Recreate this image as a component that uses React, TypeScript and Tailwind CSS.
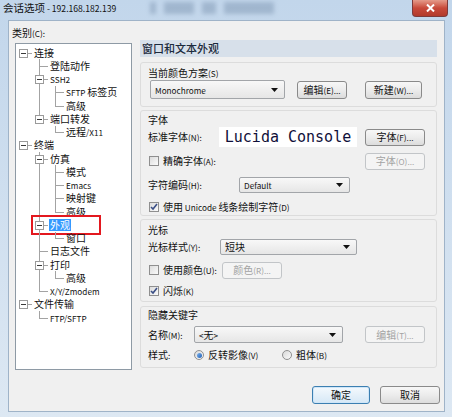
import React from "react";

// latin runs in the reference render visibly smaller than the CJK glyphs
const mix = (s: string) =>
  s.split(/([\u3400-\u9fff\uff00-\uffef]+)/).map((part, i) =>
    /[\u3400-\u9fff\uff00-\uffef]/.test(part) ? (
      <React.Fragment key={i}>{part}</React.Fragment>
    ) : part ? (
      <span key={i} className="text-[0.82em] leading-none">
        {part}
      </span>
    ) : null
  );

type Row = {
  t: string;
  l: number;
  e?: boolean;
  up?: boolean;
  down?: boolean;
  g?: number[];
  sel?: boolean;
};

const rows: Row[] = [
  { t: "连接", l: 0, e: true },
  { t: "登陆动作", l: 1, up: true, down: true },
  { t: "SSH2", l: 1, e: true, up: true, down: true },
  { t: "SFTP 标签页", l: 2, up: true, down: true, g: [1] },
  { t: "高级", l: 2, up: true, g: [1] },
  { t: "端口转发", l: 1, e: true, up: true },
  { t: "远程/X11", l: 2, up: true },
  { t: "终端", l: 0, e: true },
  { t: "仿真", l: 1, e: true, up: true, down: true },
  { t: "模式", l: 2, up: true, down: true, g: [1] },
  { t: "Emacs", l: 2, up: true, down: true, g: [1] },
  { t: "映射键", l: 2, up: true, down: true, g: [1] },
  { t: "高级", l: 2, up: true, g: [1] },
  { t: "外观", l: 1, e: true, up: true, down: true, sel: true },
  { t: "窗口", l: 2, up: true, g: [1] },
  { t: "日志文件", l: 1, up: true, down: true },
  { t: "打印", l: 1, e: true, up: true, down: true },
  { t: "高级", l: 2, up: true, g: [1] },
  { t: "X/Y/Zmodem", l: 1, up: true },
  { t: "文件传输", l: 0, e: true },
  { t: "FTP/SFTP", l: 1, up: true },
];

const TreeRow = ({ r }: { r: Row }) => (
  <div className="relative flex h-[13.25px] items-center">
    {Array.from({ length: r.l }).map((_, i) => (
      <div key={i} className="relative h-full w-[16px] shrink-0">
        {r.g?.includes(i) && <span className="absolute left-[7px] top-0 h-full w-px bg-[#a3a3a3]" />}
      </div>
    ))}
    <div className="relative h-full w-[16px] shrink-0">
      {r.up && <span className="absolute left-[7px] top-0 h-1/2 w-px bg-[#a3a3a3]" />}
      {r.down && <span className="absolute left-[7px] top-1/2 h-1/2 w-px bg-[#a3a3a3]" />}
      <span className="absolute left-[7px] top-1/2 h-px w-[9px] bg-[#a3a3a3]" />
      {r.e && (
        <span className="absolute left-[3px] top-[calc(50%-4px)] flex h-[9px] w-[9px] items-center justify-center border border-[#9a9a9a] bg-white">
          <span className="h-px w-[5px] bg-[#3a3a3a]" />
        </span>
      )}
    </div>
    <span
      className={
        r.sel
          ? "ml-px flex h-[12px] items-center whitespace-nowrap bg-[#3399ff] px-px text-[10px] leading-[12px] text-white"
          : "ml-px flex h-[12px] items-center whitespace-nowrap px-px text-[10px] leading-[12px] text-[#111]"
      }
    >
      <span>{mix(r.t)}</span>
    </span>
    {r.sel && (
      <span className="pointer-events-none absolute left-[15px] top-[-3px] h-[20px] w-[70px] border-2 border-[#e3181f]" />
    )}
  </div>
);

const Btn = ({ children, w, dis, def }: { children: string; w: string; dis?: boolean; def?: boolean }) => (
  <div
    className={[
      "flex h-[17px] shrink-0 items-center justify-center rounded-[3px] border text-[10px] leading-[12px]",
      w,
      dis
        ? "border-[#c2c5c8] bg-[#f4f4f4] text-[#a3a3a3]"
        : def
        ? "border-[#3c7fb1] bg-gradient-to-b from-[#f4f9fd] to-[#d6e8f6] text-[#111] shadow-[inset_0_0_0_1px_#cfe6f8]"
        : "border-[#8a8a8a] bg-gradient-to-b from-[#f7f7f7] via-[#ececec] to-[#dcdcdc] text-[#111]",
    ].join(" ")}
  >
    <span>{mix(children)}</span>
  </div>
);

const Combo = ({ children, w, h = "h-[16px]" }: { children: string; w: string; h?: string }) => (
  <div
    className={[
      "flex shrink-0 items-center justify-between rounded-[2px] border border-[#a2a5a9] bg-gradient-to-b from-[#f8f8f8] to-[#e6e6e6] pl-[4px] pr-[6px] text-[10px] leading-[12px] text-[#111]",
      w,
      h,
    ].join(" ")}
  >
    <span>{mix(children)}</span>
    <svg width="7" height="4" viewBox="0 0 7 4">
      <path d="M0 0h7L3.5 4z" fill="#111" />
    </svg>
  </div>
);

const Check = ({ on }: { on?: boolean }) => (
  <span className="flex h-[10px] w-[10px] shrink-0 items-center justify-center border border-[#8f8f8f] bg-gradient-to-br from-[#dcdcdc] to-[#fbfbfb]">
    {on && (
      <svg width="8" height="8" viewBox="0 0 8 8">
        <path d="M1 4l2 2 4-5" fill="none" stroke="#3b4f86" strokeWidth="1.6" />
      </svg>
    )}
  </span>
);

const Radio = ({ on }: { on?: boolean }) => (
  <span className="flex h-[10px] w-[10px] shrink-0 items-center justify-center rounded-full border border-[#8f8f8f] bg-gradient-to-br from-[#d8d8d8] to-[#fbfbfb]">
    {on && <span className="h-[5px] w-[5px] rounded-full bg-gradient-to-br from-[#7cb2ec] to-[#1f5fb5]" />}
  </span>
);

const Text = ({ children, className = "" }: { children: string; className?: string }) => (
  <span className={"whitespace-nowrap leading-[12px] " + className}>{mix(children)}</span>
);

export default function App() {
  return (
    <div className="relative h-[417px] w-[452px] overflow-hidden bg-gradient-to-b from-[#c2d6eb] to-[#dde8f3] font-['Noto_Sans_CJK_SC','Liberation_Sans',sans-serif]">
      {/* title bar */}
      <div className="relative flex h-[20px] items-start">
        {/* blurred glass behind the title */}
        <div className="pointer-events-none absolute left-[150px] top-[2px] flex gap-[8px] opacity-40 blur-[2px]">
          <span className="h-[12px] w-[6px] bg-[#6f88a5]" />
          <span className="h-[12px] w-[30px] bg-[#6f88a5]" />
          <span className="h-[12px] w-[14px] bg-[#6f88a5]" />
          <span className="h-[12px] w-[50px] bg-[#6f88a5]" />
        </div>
        <span className="relative ml-[3px] mt-[1px] whitespace-nowrap text-[10.5px] leading-[13px] text-[#111]">
          {mix("会话选项 - 192.168.182.139")}
        </span>
        <div className="absolute right-[4px] top-0 flex h-[17px] w-[36px] items-center justify-center rounded-b-[4px] border border-t-0 border-[#7d3a3a] bg-gradient-to-b from-[#e49a8a] via-[#c8493a] to-[#b23a2b]">
          <svg width="9" height="8" viewBox="0 0 9 8">
            <path d="M1 0.5l7 7M8 0.5l-7 7" stroke="#fff" strokeWidth="2" />
          </svg>
        </div>
      </div>

      {/* client */}
      <div className="ml-[8px] flex h-[392px] w-[437px] flex-col border border-[#9fb3c8] bg-[#f0f0f0] text-[10px] text-[#111]">
        <div className="flex items-start">
          <div className="ml-[3px] flex flex-col">
            <div className="mt-[5px] h-[14px] leading-[14px]">{mix("类别(C):")}</div>
            <div className="ml-[3px] mt-[3px] h-[327px] w-[117px] border border-[#8e9aa5] bg-white pt-[2px]">
              {rows.map((r, i) => (
                <TreeRow key={i} r={r} />
              ))}
            </div>
          </div>

          <div className="ml-[8px] mt-[19px] flex w-[297px] flex-col">
            <div className="flex h-[17px] items-center bg-[#d7e0ea] pl-[2px] text-[11px] font-medium leading-[13px] text-[#1c2a3c]">
              窗口和文本外观
            </div>

            {/* color scheme */}
            <div className="mt-[5px] h-[45px] rounded-[3px] border border-[#dcdcdc] pl-[7px]">
              <div className="mt-[4px] flex h-[12px] items-center">
                <Text>当前颜色方案(S)</Text>
              </div>
              <div className="mt-px flex items-center">
                <Combo w="w-[135px] ml-[2px]" h="h-[19px]">Monochrome</Combo>
                <div className="ml-[12px]">
                  <Btn w="w-[50px] h-[18px]">编辑(E)...</Btn>
                </div>
                <div className="ml-[18px]">
                  <Btn w="w-[57px] h-[18px]">新建(W)...</Btn>
                </div>
              </div>
            </div>

            {/* font */}
            <div className="mt-[3px] h-[106px] rounded-[3px] border border-[#dcdcdc] pl-[7px] pr-[11px]">
              <div className="mt-[3px] flex h-[12px] items-center">
                <Text>字体</Text>
              </div>
              <div className="mt-px flex h-[20px] items-center">
                <Text className="w-[71px] shrink-0">标准字体(N):</Text>
                <div className="flex h-[20px] w-[138px] items-center justify-center bg-white font-['DejaVu_Sans_Mono',monospace] text-[15px] leading-[18px] text-[#10103a]">
                  Lucida Console
                </div>
                <div className="ml-auto">
                  <Btn w="w-[60px]">字体(F)...</Btn>
                </div>
              </div>
              <div className="mt-[4px] flex h-[20px] items-center">
                <span className="ml-px">
                  <Check />
                </span>
                <Text className="ml-[4px]">精确字体(A):</Text>
                <div className="ml-auto">
                  <Btn w="w-[60px]" dis>
                    字体(O)...
                  </Btn>
                </div>
              </div>
              <div className="mt-[6px] flex h-[16px] items-center">
                <Text className="w-[91px] shrink-0">字符编码(H):</Text>
                <Combo w="w-[111px]">Default</Combo>
              </div>
              <div className="mt-[7px] flex h-[14px] items-center">
                <span className="ml-px">
                  <Check on />
                </span>
                <Text className="ml-[4px]">使用 Unicode 线条绘制字符(D)</Text>
              </div>
            </div>

            {/* cursor */}
            <div className="mt-[3px] h-[83px] rounded-[3px] border border-[#dcdcdc] pl-[7px] pr-[11px]">
              <div className="mt-[4px] flex h-[12px] items-center">
                <Text>光标</Text>
              </div>
              <div className="mt-[3px] flex h-[16px] items-center">
                <Text className="w-[72px] shrink-0">光标样式(Y):</Text>
                <Combo w="w-[137px]">短块</Combo>
              </div>
              <div className="mt-[7px] flex h-[16px] items-center">
                <div className="flex w-[74px] shrink-0 items-center">
                  <span className="ml-px">
                    <Check />
                  </span>
                  <Text className="ml-[4px]">使用颜色(U):</Text>
                </div>
                <Btn w="w-[60px]" dis>
                  颜色(R)...
                </Btn>
              </div>
              <div className="mt-[7px] flex h-[12px] items-center">
                <span className="ml-px">
                  <Check on />
                </span>
                <Text className="ml-[4px]">闪烁(K)</Text>
              </div>
            </div>

            {/* hidden keywords */}
            <div className="mt-[4px] h-[62px] rounded-[3px] border border-[#dcdcdc] pl-[7px] pr-[11px]">
              <div className="mt-[2px] flex h-[12px] items-center">
                <Text>隐藏关键字</Text>
              </div>
              <div className="mt-[5px] flex h-[17px] items-center">
                <Text className="w-[46px] shrink-0">名称(M):</Text>
                <Combo w="w-[149px]" h="h-[17px]">
                  {"<无>"}
                </Combo>
                <div className="ml-auto">
                  <Btn w="w-[60px]" dis>
                    编辑(T)...
                  </Btn>
                </div>
              </div>
              <div className="mt-[6px] flex h-[12px] items-center">
                <Text className="w-[46px] shrink-0">样式:</Text>
                <div className="flex w-[88px] shrink-0 items-center">
                  <Radio on />
                  <Text className="ml-[4px]">反转影像(V)</Text>
                </div>
                <div className="flex items-center">
                  <Radio />
                  <Text className="ml-[4px]">粗体(B)</Text>
                </div>
              </div>
            </div>
          </div>
        </div>

        <div className="mt-[16px] flex justify-end gap-[10px] pr-[4px]">
          <Btn w="w-[58px] h-[18px]" def>
            确定
          </Btn>
          <Btn w="w-[60px] h-[18px]">取消</Btn>
        </div>
      </div>
    </div>
  );
}
